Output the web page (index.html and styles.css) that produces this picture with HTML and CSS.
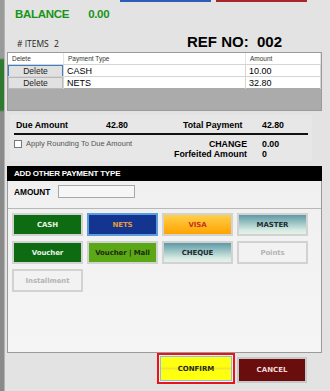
FILE: index.html
```html
<!DOCTYPE html>
<html lang="en">
<head>
  <meta charset="UTF-8" />
  <title>Payment</title>
  <link rel="stylesheet" href="styles.css">
</head>
<body>
  <div class="behind"></div>
  <div class="dialog">
    <div class="peek">
      <span class="peek-blue"></span>
      <span class="peek-red"></span>
    </div>

    <div class="balance">
      <span>BALANCE</span>
      <span>0.00</span>
    </div>

    <div class="ref-row">
      <div class="items"># ITEMS <span class="items-count">2</span></div>
      <div class="ref">REF NO:&nbsp; 002</div>
    </div>

    <div class="grid">
      <div class="grid-head">
        <div>Delete</div>
        <div>Payment Type</div>
        <div>Amount</div>
      </div>
      <div class="grid-row">
        <div class="cell-btn"><button class="del focus">Delete</button></div>
        <div>CASH</div>
        <div>10.00</div>
      </div>
      <div class="grid-row">
        <div class="cell-btn"><button class="del">Delete</button></div>
        <div>NETS</div>
        <div>32.80</div>
      </div>
      <div class="grid-empty"></div>
    </div>

    <div class="summary">
      <div class="due-row">
        <span>Due Amount</span>
        <span>42.80</span>
        <span>Total Payment</span>
        <span>42.80</span>
      </div>
      <div class="totals">
        <label class="rounding"><span class="check"></span>Apply Rounding To Due Amount</label>
        <div class="change">
          <span class="right">CHANGE</span><span>0.00</span>
          <span class="right">Forfeited Amount</span><span>0</span>
        </div>
      </div>
    </div>

    <div class="section-title">ADD OTHER PAYMENT TYPE</div>

    <div class="panel">
      <div class="amount-row">
        <span>AMOUNT</span>
        <input class="amount" type="text">
      </div>
      <div class="pay-types">
        <button class="pay cash">CASH</button>
        <button class="pay nets">NETS</button>
        <button class="pay visa">VISA</button>
        <button class="pay master">MASTER</button>
        <button class="pay cash">Voucher</button>
        <button class="pay mall">Voucher | Mall</button>
        <button class="pay master">CHEQUE</button>
        <button class="pay off">Points</button>
        <button class="pay off">Installment</button>
      </div>
    </div>

    <div class="actions">
      <div class="confirm-wrap"><button class="confirm">CONFIRM</button></div>
      <button class="cancel">CANCEL</button>
    </div>
  </div>
</body>
</html>
```

FILE: styles.css
```css
body {
  margin: 0;
  width: 330px;
  height: 391px;
  overflow: hidden;
  display: flex;
  background: #e3e3e3;
  font-family: 'Liberation Sans', Arial, sans-serif;
  color: #000;
}

.behind {
  width: 4px;
  background: linear-gradient(to bottom, #9a9a9a 0, #9a9a9a 58px, #2f7a2f 60px, #2f7a2f 110px, #8a8a8a 112px);
  border-right: 1px solid #b4b4b4;
}

.dialog {
  flex: 1;
  padding: 0 8px 0 2px;
  display: flex;
  flex-direction: column;
}

.peek {
  height: 2px;
  display: flex;
  gap: 5px;
  padding-left: 113px;
}

.peek-blue { width: 91px; background: #2a5cb8; }
.peek-red { width: 91px; background: #a8262a; }

.balance {
  margin-top: 4px;
  padding-left: 8px;
  height: 16px;
  display: flex;
  gap: 19px;
  font-size: 11.5px;
  font-weight: bold;
  letter-spacing: -0.3px;
  color: #189418;
  align-items: center;
}

.ref-row {
  margin-top: 10px;
  height: 18px;
  display: flex;
  align-items: flex-end;
  justify-content: space-between;
  padding: 0 40px 0 10px;
}

.items {
  font-family: 'Open Sans', sans-serif;
  font-size: 8.5px;
  color: #222;
  line-height: 11px;
  padding-bottom: 1px;
}

.items-count { margin-left: 3px; }

.ref {
  font-size: 15px;
  font-weight: bold;
  line-height: 16px;
}

.grid {
  margin-top: 2px;
  border: 1px solid #9a9a9a;
  background: #ababab;
}

.grid-head,
.grid-row {
  display: grid;
  grid-template-columns: 56px 182px 1fr;
  background: #fff;
}

.grid-head {
  height: 11px;
  font-size: 6.5px;
  color: #333;
  line-height: 11px;
}

.grid-head div {
  padding-left: 4px;
  border-right: 1px solid #e4e4e4;
}

.grid-row {
  height: 12px;
  line-height: 12px;
  font-size: 9px;
}

.grid-row div {
  padding-left: 3px;
  border-right: 1px solid #d4d4d4;
  border-top: 1px solid #d4d4d4;
}

.grid-row .cell-btn { padding: 0; }

.del {
  display: block;
  width: 100%;
  height: 12px;
  margin: 0;
  padding: 0;
  border: 1px solid #b9b9b9;
  background: #e1e1e1;
  font-family: 'Liberation Sans', Arial, sans-serif;
  font-size: 8.5px;
  color: #222;
  line-height: 10px;
}

.del.focus { border-color: #3c7fc6; }

.grid-empty { height: 22px; }

.summary {
  margin: 4px 10px 0 3px;
  padding: 5px 4px 2px;
  background: #e7e7e7;
  font-size: 8.8px;
  font-weight: bold;
}

.due-row {
  display: grid;
  grid-template-columns: 90px 77px 79px 1fr;
  padding: 0 0 2px 2px;
  border-bottom: 2px solid #111;
  line-height: 11px;
}

.totals {
  display: flex;
  justify-content: space-between;
  padding-top: 4px;
}

.rounding {
  display: flex;
  align-items: flex-start;
  gap: 4px;
  font-weight: normal;
  font-size: 7.5px;
  color: #555;
  line-height: 10px;
}

.check {
  width: 6px;
  height: 6px;
  margin-top: 1px;
  border: 1px solid #777;
  background: #fff;
}

.change {
  display: grid;
  grid-template-columns: auto 46px;
  column-gap: 15px;
  line-height: 10px;
}

.change .right { text-align: right; }

.section-title {
  margin-top: 5px;
  height: 15px;
  line-height: 15px;
  background: #000;
  color: #fff;
  font-size: 8px;
  font-weight: bold;
  padding-left: 7px;
  letter-spacing: -0.2px;
}

.panel {
  height: 172px;
  box-sizing: border-box;
  border: 1px solid #9a9a9a;
  border-top: none;
  background: linear-gradient(to bottom, #f0f0f0, #f5f5f5);
}

.amount-row {
  height: 28px;
  box-sizing: border-box;
  display: flex;
  align-items: center;
  gap: 8px;
  padding: 4px 0 10px 6px;
  border-bottom: 1px solid #b8b8b8;
  font-size: 8.3px;
  font-weight: bold;
}

.amount {
  width: 77px;
  height: 13px;
  box-sizing: border-box;
  margin: 0;
  border: 1px solid #a8a8a8;
  background: #f6f6f6;
}

.pay-types {
  display: grid;
  grid-template-columns: repeat(4, 71px);
  grid-auto-rows: 23px;
  column-gap: 4px;
  row-gap: 5px;
  padding: 4px 0 0 4px;
}

.pay {
  margin: 0;
  padding: 0;
  border: 2px solid #d2d2d2;
  font-family: 'DejaVu Sans', Tahoma, sans-serif;
  font-size: 7px;
  font-weight: bold;
  letter-spacing: -0.1px;
}

.pay.cash { background: #0d6b11; color: #e8f2e8; }
.pay.nets { background: #14358f; color: #e49a3a; border-color: #5b9be0; }
.pay.visa { background: linear-gradient(to bottom, #ffcf4a, #ffa400); color: #c5341a; }
.pay.master { background: linear-gradient(to bottom, #5e99a6, #d6ebe2 80%, #e6f2ea); color: #1f2d33; }
.pay.mall { background: #5aa815; color: #1e2a10; }
.pay.off { background: #f2f2f2; color: #b5b5b5; }

.actions {
  display: flex;
  justify-content: flex-end;
  align-items: flex-start;
  gap: 2px;
  padding-right: 15px;
  height: 32px;
}

.confirm-wrap {
  border: 2px solid #e8141a;
  padding: 1px;
  background: #f3f3f3;
}

.confirm {
  display: block;
  width: 72px;
  height: 25px;
  margin: 0;
  padding: 0;
  border: 1px solid #8fbde6;
  background: linear-gradient(to bottom, #ffff10 0, #ffff10 40%, #f2e82a 50%, #ffff10 60%, #ffff10);
  font-family: 'DejaVu Sans', Tahoma, sans-serif;
  font-size: 7px;
  font-weight: bold;
  color: #2a2a10;
}

.cancel {
  width: 70px;
  height: 26px;
  margin: 4px 0 0;
  padding: 0;
  border: 2px solid #c8c8c8;
  background: #6a0d0d;
  font-family: 'DejaVu Sans', Tahoma, sans-serif;
  font-size: 7px;
  font-weight: bold;
  color: #f0d8d8;
}
```
